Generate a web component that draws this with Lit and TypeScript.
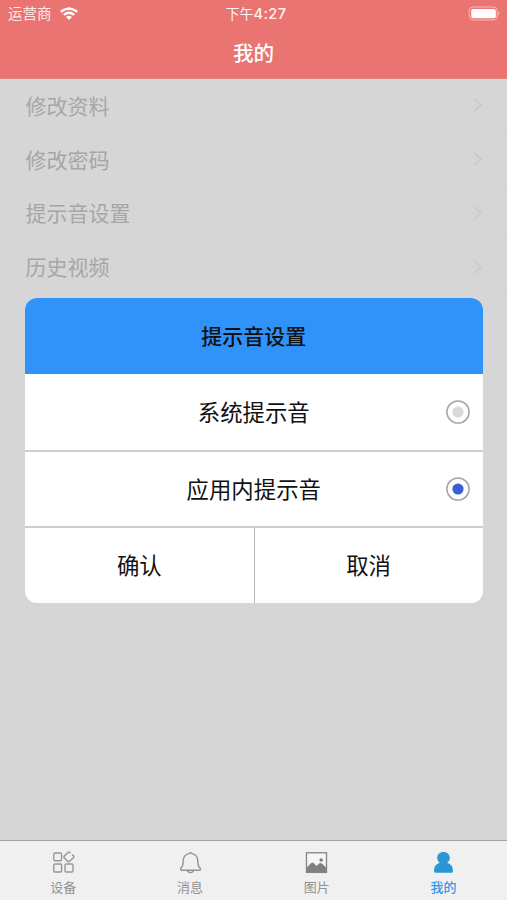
import { LitElement, html, css, svg } from "lit";
import { customElement, state } from "lit/decorators.js";
import { classMap } from "lit/directives/class-map.js";

const tabs = [
  {
    label: "设备",
    icon: svg`<g fill="none" stroke="#979797" stroke-width="1.4">
      <rect x="1.8" y="2" width="7.8" height="7.8" rx="1.2"/>
      <rect x="1.8" y="13" width="7.8" height="8" rx="1.2"/>
      <rect x="13" y="13" width="8" height="8" rx="1.2"/>
      <path d="M18.4 2 L17.8 1.4 Q17 .8 16.2 1.4 L12.2 5.2 Q11.6 6 12.2 6.8 L15.8 10.4 Q16.6 11 17.4 10.4 L21.6 6.6 Q22.2 5.8 21.6 5 L20 3.5"/></g>`,
  },
  {
    label: "消息",
    icon: svg`<g fill="none" stroke="#939393" stroke-width="1.4" stroke-linejoin="round" stroke-linecap="round">
      <path d="M10 2.6 Q11.5 .6 13 2.6 C17 3.5 18.8 6.4 18.8 10 C18.8 14.5 19.4 15.8 21.2 17.2 Q22 19.2 20.2 19.2 H2.8 Q1 19.2 1.8 17.2 C3.6 15.8 4.2 14.5 4.2 10 C4.2 6.4 6 3.5 10 2.6 Z"/>
      <path d="M8.4 19.4 Q9 21.6 11.5 21.6 Q14 21.6 14.6 19.4"/></g>`,
  },
  {
    label: "图片",
    icon: svg`<rect x="1.5" y="1.8" width="20" height="19.6" fill="#f6f6f6" stroke="#858585" stroke-width="1.3"/>
      <path d="M2 16.2 L6 12.2 Q7.5 10.8 9 12.4 L11.6 15 L14 12.6 Q15.5 11.2 16.9 12.6 L21 16.4 V21 H2 Z" fill="#808080"/>
      <circle cx="16.2" cy="9" r="1.8" fill="#808080"/>`,
  },
  {
    label: "我的",
    icon: svg`<path d="M11.5 1 C7.8 1 5.2 3.5 5.2 6.8 C5.2 9.1 6.3 10.7 7.8 11.8 C4.3 13 2.1 15.4 2.1 19.6 V20.4 Q2.1 21.8 3.6 21.8 H19.4 Q20.9 21.8 20.9 20.4 V19.6 C20.9 15.4 18.7 13 15.2 11.8 C16.7 10.7 17.8 9.1 17.8 6.8 C17.8 3.5 15.2 1 11.5 1 Z" fill="#2a96d5"/>`,
  },
];

@customElement("app-root")
export class AppRoot extends LitElement {
  @state() private selected = 1;

  static styles = css`
    :host {
      display: flex;
      flex-direction: column;
      position: relative;
      height: 900px;
      overflow: hidden;
      background: #d6d6d6;
      font-family: "Noto Sans CJK SC", sans-serif;
      color: #111;
    }
    svg { display: block; }
    header {
      height: 79px;
      flex: none;
      background: #e97472;
      color: #fff;
      border-bottom: 1px solid #e08482;
      box-sizing: border-box;
    }
    .status {
      display: grid;
      grid-template-columns: 1fr auto 1fr;
      align-items: center;
      height: 26px;
      padding: 0 7px 0 8px;
      font-size: 14.5px;
      line-height: 26px;
    }
    .carrier { display: flex; align-items: center; gap: 8px; color: #fde9e7; }
    .time { font-size: 14px; font-weight: 400; color: #fff2f0; padding-left: 4px; }
    .time b { font: 500 14.6px Inter, sans-serif; letter-spacing: 0.4px; }
    .battery { justify-self: end; }
    h1 {
      margin: 0;
      font-size: 20.6px;
      font-weight: 500;
      line-height: 53px;
      text-align: center;
    }
    .row {
      display: flex;
      align-items: center;
      justify-content: space-between;
      height: 53.75px;
      box-sizing: border-box;
      padding: 0 23px 1px 25.5px;
      border-bottom: 1px solid #d3d3d3;
      font-size: 21px;
      line-height: 30px;
      color: #a6a6a6;
    }
    .row svg { margin-top: 1px; }
    main { flex: 1; }
    nav {
      display: flex;
      height: 60px;
      flex: none;
      box-sizing: border-box;
      border-top: 1px solid #a4a4a4;
      background: #f0f0f0;
    }
    .tab {
      flex: 1;
      display: flex;
      flex-direction: column;
      align-items: center;
      padding-top: 10px;
      font-size: 13px;
      line-height: 18px;
      gap: 4px;
      color: #929292;
    }
    .tab.active { color: #2e9bea; font-weight: 500; }
    .dialog {
      position: absolute;
      left: 25px;
      right: 24.5px;
      top: 298px;
      height: 305px;
      border-radius: 12px;
      overflow: hidden;
      background: #fff;
      display: grid;
      grid-template-rows: 76px 78px 76px 75px;
      text-align: center;
      font-size: 22.4px;
    }
    .title {
      background: #3093fa;
      font-size: 21px;
      font-weight: 500;
      line-height: 75px;
    }
    .option {
      position: relative;
      border-bottom: 2px solid #cdcdcd;
      line-height: 75px;
    }
    .option + .option { line-height: 72px; }
    .radio {
      position: absolute;
      right: 12.5px;
      top: 50%;
      width: 24px;
      height: 24px;
      transform: translateY(-50%);
    }
    .radio .dot { fill: #d8d8d8; }
    .radio.on .dot { fill: #385fd4; }
    .actions { display: grid; grid-template-columns: 1fr 1fr; line-height: 73px; }
    .actions div + div { border-left: 1px solid #b5b5b5; }
  `;

  render() {
    return html`
      <header>
        <div class="status">
          <div class="carrier">
            <span>运营商</span>
            <svg width="18" height="13" viewBox="0 0 18 13" fill="none" stroke="#fff" stroke-width="2.4">
              <path d="M.8 4.8 Q9 -1.8 17.2 4.8"/>
              <path d="M3.8 7.9 Q9 3.7 14.2 7.9"/>
              <path d="M6 10 Q9 7.4 12 10 L9 13 Z" fill="#fff" stroke="none"/>
            </svg>
          </div>
          <div class="time">下午<b>4:27</b></div>
          <svg class="battery" width="32" height="15" viewBox="0 0 32 15">
            <rect x="1.2" y="1" width="28" height="13" rx="3.8" fill="none" stroke="#f5bab5"/>
            <rect x="3.2" y="2.9" width="24.6" height="9.4" rx="1.8" fill="#fff"/>
            <path d="M30.4 5.3 Q32.8 7.4 30.4 9.5 Z" fill="#f5bab5"/>
          </svg>
        </div>
        <h1>我的</h1>
      </header>
      <main>
        ${["修改资料", "修改密码", "提示音设置", "历史视频"].map(
          (label) => html`<div class="row">
            <span>${label}</span>
            <svg width="12" height="16" viewBox="0 0 12 16" fill="none" stroke="#c8c8c8" stroke-width="1.5">
              <path d="M2 1.5 L9 8 L2 14.5"/>
            </svg>
          </div>`
        )}
      </main>
      <nav>
        ${tabs.map(
          (tab, i) => html`<div class=${classMap({ tab: true, active: i === 3 })}>
            <svg width="23" height="23" viewBox="0 0 23 23">${tab.icon}</svg>
            <span>${tab.label}</span>
          </div>`
        )}
      </nav>
      <div class="dialog">
        <div class="title">提示音设置</div>
        ${["系统提示音", "应用内提示音"].map(
          (label, i) => html`<div class="option" @click=${() => (this.selected = i)}>
            ${label}
            <svg class=${classMap({ radio: true, on: this.selected === i })} viewBox="0 0 24 24">
              <circle cx="12" cy="12" r="11.1" fill="none" stroke="#a6a6a6" stroke-width="1.5"/>
              <circle class="dot" cx="12" cy="12" r="5.6"/>
            </svg>
          </div>`
        )}
        <div class="actions"><div>确认</div><div>取消</div></div>
      </div>
    `;
  }
}
